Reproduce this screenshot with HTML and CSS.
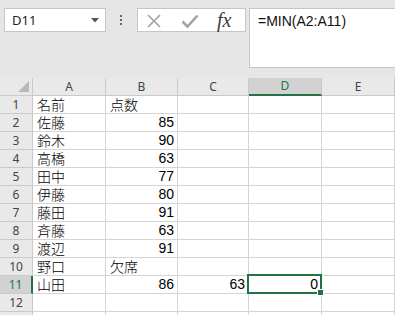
FILE: index.html
```html
<!DOCTYPE html>
<html lang="ja">
<head>
<meta charset="utf-8">
<link rel="stylesheet" href="styles.css">
</head>
<body>
<div class="app">
  <div class="toolbar">
    <div class="namebox">
      <span class="name">D11</span>
      <svg class="arrow" width="8" height="5" viewBox="0 0 8 5"><polygon points="0,0 8,0 4,4.5" fill="#555"/></svg>
    </div>
    <div class="grip"><i></i><i></i><i></i></div>
    <div class="btns">
      <svg class="ico-x" width="16" height="16" viewBox="0 0 16 16"><path d="M2 2 L14 14 M14 2 L2 14" stroke="#a3a3a3" stroke-width="1.7" fill="none"/></svg>
      <svg class="ico-ok" width="18" height="16" viewBox="0 0 18 16"><path d="M1.5 8.5 L6.5 13.5 L16.5 2.5" stroke="#a3a3a3" stroke-width="2.6" fill="none"/></svg>
      <span class="fx">fx</span>
    </div>
    <div class="formula">=MIN(A2:A11)</div>
  </div>
  <div class="sheet">
    <div class="h corner"><svg width="11" height="11" viewBox="0 0 11 11"><polygon points="11,0 11,11 0,11" fill="#b9b9b9"/></svg></div>
    <div class="h">A</div><div class="h">B</div><div class="h">C</div><div class="h selcol">D</div><div class="h">E</div>

    <div class="r">1</div><div class="c">名前</div><div class="c">点数</div><div class="c"></div><div class="c"></div><div class="c"></div>
    <div class="r">2</div><div class="c">佐藤</div><div class="c num">85</div><div class="c"></div><div class="c"></div><div class="c"></div>
    <div class="r">3</div><div class="c">鈴木</div><div class="c num">90</div><div class="c"></div><div class="c"></div><div class="c"></div>
    <div class="r">4</div><div class="c">高橋</div><div class="c num">63</div><div class="c"></div><div class="c"></div><div class="c"></div>
    <div class="r">5</div><div class="c">田中</div><div class="c num">77</div><div class="c"></div><div class="c"></div><div class="c"></div>
    <div class="r">6</div><div class="c">伊藤</div><div class="c num">80</div><div class="c"></div><div class="c"></div><div class="c"></div>
    <div class="r">7</div><div class="c">藤田</div><div class="c num">91</div><div class="c"></div><div class="c"></div><div class="c"></div>
    <div class="r">8</div><div class="c">斉藤</div><div class="c num">63</div><div class="c"></div><div class="c"></div><div class="c"></div>
    <div class="r">9</div><div class="c">渡辺</div><div class="c num">91</div><div class="c"></div><div class="c"></div><div class="c"></div>
    <div class="r">10</div><div class="c">野口</div><div class="c">欠席</div><div class="c"></div><div class="c"></div><div class="c"></div>
    <div class="r selrow">11</div><div class="c">山田</div><div class="c num">86</div><div class="c num">63</div><div class="c num active">0</div><div class="c"></div>
    <div class="r">12</div><div class="c"></div><div class="c"></div><div class="c"></div><div class="c"></div><div class="c"></div>
    <div class="r"></div><div class="c"></div><div class="c"></div><div class="c"></div><div class="c"></div><div class="c"></div>
  </div>
</div>
</body>
</html>
```
FILE: styles.css
```css
html, body {
  margin: 0;
  padding: 0;
  background: #ffffff;
  overflow: hidden;
}
.app {
  width: 395px;
  height: 315px;
  overflow: hidden;
  font-family: "Liberation Sans", Arial, sans-serif;
}
.toolbar {
  box-sizing: border-box;
  height: 78px;
  padding: 8px 0 0 4px;
  background: #e6e6e6;
  display: flex;
  align-items: flex-start;
}
.namebox {
  box-sizing: border-box;
  width: 102px;
  height: 24px;
  border: 1px solid #c6c6c6;
  background: #fff;
  display: flex;
  align-items: center;
  justify-content: space-between;
  padding: 0 6px 0 7px;
}
.name {
  font-family: "Noto Sans", sans-serif;
  font-size: 13px;
  color: #222;
}
.arrow { margin-top: 1px; }
.grip {
  width: 2px;
  margin: 7px 15px 0 14px;
  display: flex;
  flex-direction: column;
  gap: 2px;
}
.grip i {
  display: block;
  width: 2px;
  height: 2px;
  background: #666;
}
.btns {
  box-sizing: border-box;
  width: 109px;
  height: 24px;
  border: 1px solid #c6c6c6;
  background: #fff;
  display: flex;
  align-items: center;
  padding-left: 8px;
}
.ico-x { margin-top: 2px; }
.ico-ok { margin: 2px 0 0 19px; }
.fx {
  margin-left: 18px;
  font-family: "Liberation Serif", serif;
  font-style: italic;
  font-size: 20px;
  line-height: 20px;
  color: #3c3c3c;
}
.formula {
  box-sizing: border-box;
  flex: 1;
  margin-left: 3px;
  height: 60px;
  border: 1px solid #c6c6c6;
  border-right: none;
  background: #fff;
  padding: 3px 8px;
  font-size: 14px;
  line-height: 18px;
  color: #111;
}
.sheet {
  display: grid;
  grid-template-columns: 33px 73px 72px 71px 73px 73px;
  grid-auto-rows: 18px;
}
.sheet > div {
  box-sizing: border-box;
  border-right: 1px solid #d4d4d4;
  border-bottom: 1px solid #d4d4d4;
  white-space: nowrap;
}
.h, .r {
  background: #e9e9e9;
  font-family: "Noto Sans", sans-serif;
  font-size: 12px;
  line-height: 16px;
  color: #444;
  display: flex;
  align-items: center;
  justify-content: center;
}
.sheet > .h, .sheet > .r {
  border-color: #c9c9c9;
}
.corner {
  justify-content: flex-end;
  align-items: flex-end;
  padding: 0 3px 3px 0;
}
.corner svg { display: block; }
.sheet > .selcol {
  background: #d2d2d2;
  color: #217346;
  border-bottom: 2px solid #217346;
}
.sheet > .selrow {
  background: #d2d2d2;
  color: #217346;
  border-right: 2px solid #217346;
}
.c {
  font-family: "Noto Sans CJK JP", sans-serif;
  font-weight: 300;
  font-size: 14px;
  line-height: 17px;
  color: #000;
  display: flex;
  align-items: flex-end;
  padding: 0 3px 0 4px;
}
.num {
  justify-content: flex-end;
  font-family: "Liberation Sans", Arial, sans-serif;
  font-weight: 400;
  line-height: 16px;
  padding-bottom: 1px;
}
.active {
  position: relative;
}
.active::before {
  content: "";
  position: absolute;
  left: -2px;
  top: -2px;
  right: -1px;
  bottom: -1px;
  border: 2px solid #217346;
}
.active::after {
  content: "";
  position: absolute;
  right: -3px;
  bottom: -3px;
  width: 5px;
  height: 5px;
  background: #217346;
  border: 1px solid #fff;
}
```
